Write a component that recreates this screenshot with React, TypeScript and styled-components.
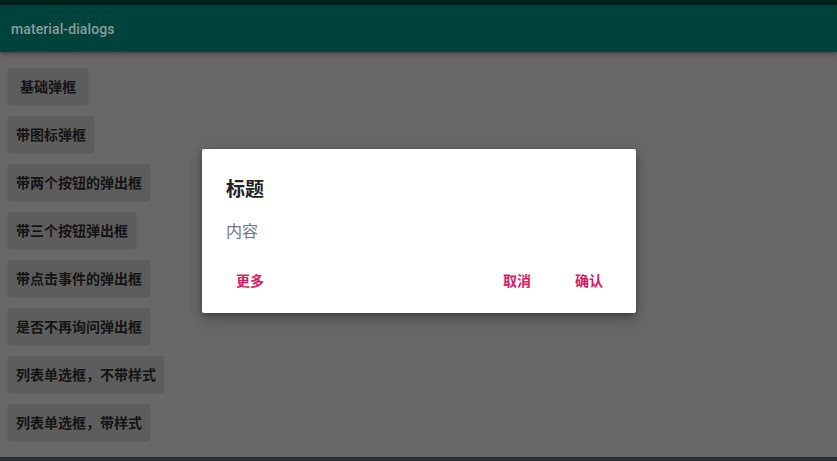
import React from "react";
import styled, { createGlobalStyle } from "styled-components";

const Global = createGlobalStyle`
  html, body { margin: 0; padding: 0; }
  body { width: 837px; height: 461px; overflow: hidden; font-family: Roboto, "Noto Sans CJK SC", sans-serif; }
`;

const Screen = styled.div`
  position: relative;
  width: 837px;
  height: 461px;
  display: flex;
  flex-direction: column;
  background: #686868;
  overflow: hidden;
`;

const StatusBar = styled.div`
  height: 5px;
  background: #00221d;
  flex: none;
`;

const Toolbar = styled.header`
  height: 47px;
  flex: none;
  background: #00433a;
  display: flex;
  align-items: center;
  padding-left: 11px;
  box-shadow: 0 2px 4px rgba(0, 0, 0, 0.35);
  position: relative;
  z-index: 1;
`;

const Title = styled.h1`
  margin: 0;
  font-family: Roboto, "Noto Sans", sans-serif;
  font-size: 14px;
  font-weight: 500;
  color: #8c9b99;
  letter-spacing: 0.1px;
`;

const List = styled.main`
  flex: 1;
  display: flex;
  flex-direction: column;
  align-items: flex-start;
  gap: 12px;
  padding: 16px 8px 0;
`;

const DemoButton = styled.button`
  height: 36px;
  min-width: 80px;
  padding: 0 8px;
  border: none;
  border-radius: 2px;
  background: #5d5d5d;
  color: #141414;
  font-family: "Noto Sans CJK SC", sans-serif;
  font-size: 14px;
  font-weight: 700;
  box-shadow: 0 1px 2px rgba(0, 0, 0, 0.15);
  display: flex;
  align-items: center;
  justify-content: center;
`;

const NavBar = styled.div`
  height: 4px;
  flex: none;
  background: #2b3136;
`;

const Dialog = styled.div`
  position: absolute;
  left: 202px;
  top: 149px;
  width: 434px;
  height: 164px;
  background: #ffffff;
  border-radius: 2px;
  box-shadow: 0 5px 14px rgba(0, 0, 0, 0.3), 0 2px 5px rgba(0, 0, 0, 0.2);
  display: flex;
  flex-direction: column;
  box-sizing: border-box;
  padding: 26px 0 0;
`;

const DialogTitle = styled.div`
  padding: 0 24px;
  font-family: "Noto Sans CJK SC", sans-serif;
  font-size: 19px;
  font-weight: 700;
  line-height: 26px;
  color: #212121;
`;

const DialogContent = styled.div`
  padding: 0 24px;
  margin-top: 19px;
  font-family: "Noto Sans CJK SC", sans-serif;
  font-size: 16px;
  line-height: 20px;
  color: #757575;
`;

const Actions = styled.div`
  margin-top: 22px;
  display: flex;
  align-items: center;
  padding: 0 19px 0 20px;
`;

const Spacer = styled.div`
  flex: 1;
`;

const ActionButton = styled.span<{ $gap?: number }>`
  font-family: "Noto Sans CJK SC", sans-serif;
  font-size: 14px;
  font-weight: 700;
  color: #d81b60;
  padding: 8px 14px;
  line-height: 20px;
  margin-left: ${(p) => p.$gap ?? 0}px;
`;

const items = [
  "基础弹框",
  "带图标弹框",
  "带两个按钮的弹出框",
  "带三个按钮弹出框",
  "带点击事件的弹出框",
  "是否不再询问弹出框",
  "列表单选框，不带样式",
  "列表单选框，带样式",
];

export default function App() {
  return (
    <>
      <Global />
      <Screen>
        <StatusBar />
        <Toolbar>
          <Title>material-dialogs</Title>
        </Toolbar>
        <List>
          {items.map((t) => (
            <DemoButton key={t}>{t}</DemoButton>
          ))}
        </List>
        <NavBar />
        <Dialog>
          <DialogTitle>标题</DialogTitle>
          <DialogContent>内容</DialogContent>
          <Actions>
            <ActionButton>更多</ActionButton>
            <Spacer />
            <ActionButton>取消</ActionButton>
            <ActionButton $gap={16}>确认</ActionButton>
          </Actions>
        </Dialog>
      </Screen>
    </>
  );
}
